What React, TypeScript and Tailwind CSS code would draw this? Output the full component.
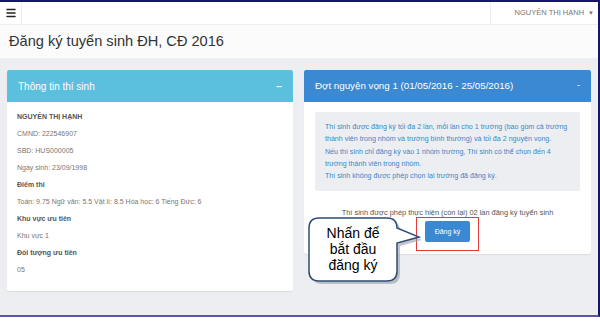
import { Menu } from "lucide-react";

const infoRows: { text: string; bold?: boolean }[] = [
  { text: "NGUYỄN THỊ HẠNH", bold: true },
  { text: "CMND: 222546907" },
  { text: "SBD: HUS000005" },
  { text: "Ngày sinh: 23/09/1998" },
  { text: "Điểm thi", bold: true },
  { text: "Toán: 9.75 Ngữ văn: 5.5 Vật lí: 8.5 Hóa học: 6 Tiếng Đức: 6" },
  { text: "Khu vực ưu tiên", bold: true },
  { text: "Khu vực 1" },
  { text: "Đối tượng ưu tiên", bold: true },
  { text: "05" },
];

const noteLines = [
  "Thí sinh được đăng ký tối đa 2 lần, mỗi lần cho 1 trường (bao gồm cả trường",
  "thành viên trong nhóm và trường bình thường) và tối đa 2 nguyện vọng.",
  "Nếu thí sinh chỉ đăng ký vào 1 nhóm trường, Thí sinh có thể chọn đến 4",
  "trường thành viên trong nhóm.",
  "Thí sinh không được phép chọn lại trường đã đăng ký.",
];

function Callout() {
  const d =
    "M19,8 H87 Q97,8 97,18 L119,27 L97,33 V61 Q97,71 87,71 H19 Q9,71 9,61 V18 Q9,8 19,8 Z";
  return (
    <div className="absolute left-[300px] top-[210px] h-[80px] w-[125px]">
      <svg width="125" height="80" viewBox="0 0 125 80" className="absolute inset-0">
        <path d={d} transform="translate(3,3)" fill="#9aa0a8" opacity="0.6" />
        <path d={d} fill="#ffffff" stroke="#2f4c78" strokeWidth="1.5" />
      </svg>
      <div className="absolute left-[9px] top-[15px] w-[88px] text-center text-[14px] leading-[16px] text-black">
        Nhấn để
        <br />
        bắt đầu
        <br />
        đăng ký
      </div>
    </div>
  );
}

export default function App() {
  return (
    <div className="relative h-[322px] w-[600px] overflow-hidden bg-white font-['Liberation_Sans',Arial,sans-serif]">
      <div className="flex h-[317px] flex-col border-b-2 border-r-2 border-t-2 border-b-[#5656a6] border-r-[#16166a] border-t-[#16166a]">
        <header className="flex h-[23px] items-stretch border-b border-[#eeeeee] bg-white">
          <div className="flex w-[22px] items-center justify-center border-r border-[#eeeeee]">
            <Menu className="h-[12px] w-[12px] text-[#222]" strokeWidth={3} />
          </div>
          <div className="flex-1" />
          <div className="flex items-center gap-[4px] border-l border-[#eeeeee] pl-[24px] pr-[4px] text-[7.5px] text-[#777]">
            NGUYỄN THỊ HẠNH
            <span className="text-[6px]">▼</span>
          </div>
        </header>

        <div className="flex h-[33px] items-center bg-[#fbfbfb] px-[9px] text-[14.6px] text-[#333]">
          Đăng ký tuyển sinh ĐH, CĐ 2016
        </div>

        <main className="flex flex-1 items-start gap-[11px] bg-[#eceef1] px-[7px] pt-[12px]">
          <section className="w-[286px] rounded-[2px] bg-white shadow-[0_1px_1px_rgba(0,0,0,0.08)]">
            <div className="flex h-[32px] items-center justify-between rounded-t-[2px] bg-[#5bc0de] px-[11px] text-white">
              <span className="text-[10px]">Thông tin thí sinh</span>
              <span className="text-[10px] font-bold">−</span>
            </div>
            <div className="px-[10px] pb-[13px] pt-[6px] text-[7px] text-[#777]">
              {infoRows.map((row) => (
                <div
                  key={row.text}
                  className={`h-[17px] leading-[17px] ${row.bold ? "font-bold text-[#555]" : ""}`}
                >
                  {row.text}
                </div>
              ))}
            </div>
          </section>

          <section className="relative w-[287px] rounded-[2px] bg-white shadow-[0_1px_1px_rgba(0,0,0,0.08)]">
            <div className="flex h-[32px] items-center justify-between rounded-t-[2px] bg-[#3a89d2] px-[11px] text-white">
              <span className="text-[9.75px]">Đợt nguyện vọng 1 (01/05/2016 - 25/05/2016)</span>
              <span className="text-[9px]">-</span>
            </div>
            <div className="px-[11px] pt-[10px]">
              <div className="rounded-[2px] bg-[#eceef1] px-[10px] py-[9px] text-[7.1px] leading-[12.3px] text-[#3a87c8]">
                {noteLines.map((line) => (
                  <div key={line} className="whitespace-nowrap">
                    {line}
                  </div>
                ))}
              </div>
            </div>
            <div className="pt-[17px] text-center text-[7.4px] leading-[10px] text-[#555]">
              Thí sinh được phép thực hiện (còn lại) 02 lần đăng ký tuyển sinh
            </div>
            <div className="flex justify-center pb-[12px] pt-[3px]">
              <button
                type="button"
                className="h-[21px] w-[45px] rounded-[2px] bg-[#3a89d2] text-[7px] text-white"
              >
                Đăng ký
              </button>
            </div>
            <div className="absolute left-[112px] top-[147px] h-[34px] w-[63px] border-[1.5px] border-[#e23b3b]" />
          </section>
        </main>
      </div>
      <Callout />
    </div>
  );
}
